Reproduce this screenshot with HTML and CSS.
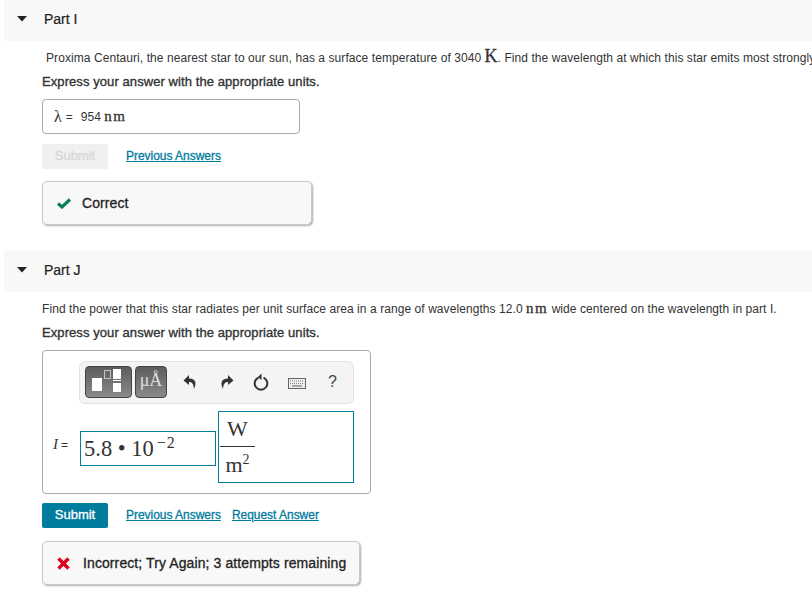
FILE: index.html
```html
<!DOCTYPE html>
<html lang="en">
<head>
<meta charset="utf-8">
<title>Parts</title>
<link rel="stylesheet" href="styles.css">
</head>
<body>
<section class="part part-i">
  <header class="part-head">
    <svg class="caret" width="10" height="6" viewBox="0 0 10 6"><path d="M0 0H10L5 5.500Z" fill="#222"/></svg>
    <span>Part I</span>
  </header>
  <div class="body">
    <p class="prompt first">Proxima Centauri, the nearest star to our sun, has a surface temperature of 3040 <span class="unit big">K</span>. Find the wavelength at which this star emits most strongly.</p>
    <p class="instr first-instr">Express your answer with the appropriate units.</p>
    <div class="answer-box"><span class="lam">λ</span><span class="eq">=</span><span>954 <span class="unit">nm</span></span></div>
    <div class="actions">
      <button class="btn disabled" type="button">Submit</button>
      <a class="link" href="#">Previous Answers</a>
    </div>
    <div class="feedback ok">
      <svg class="fb-icon" width="14" height="11" viewBox="0 0 14 11"><path d="M1 5.500L5 9L13 1.500" fill="none" stroke="#0d8050" stroke-width="3.200"/></svg>
      <span>Correct</span>
    </div>
  </div>
</section>
<section class="part part-j">
  <header class="part-head">
    <svg class="caret" width="10" height="6" viewBox="0 0 10 6"><path d="M0 0H10L5 5.500Z" fill="#222"/></svg>
    <span>Part J</span>
  </header>
  <div class="body">
    <p class="prompt">Find the power that this star radiates per unit surface area in a range of wavelengths 12.0 <span class="unit">nm</span> wide centered on the wavelength in part I.</p>
    <p class="instr">Express your answer with the appropriate units.</p>
    <div class="editor">
      <div class="toolbar">
        <div class="tool tool-a">
          <svg width="45" height="30" viewBox="0 0 45 30"><rect x="6" y="11" width="10" height="13" fill="#fff"/><rect x="18.500" y="3.500" width="6" height="8" fill="none" stroke="#c4c4c4"/><rect x="27" y="2" width="8" height="10" fill="#fff"/><rect x="27" y="13" width="8" height="1" fill="#fff"/><rect x="27" y="16" width="8" height="9" fill="#fff"/></svg>
        </div>
        <div class="tool tool-b">μÅ</div>
        <svg class="act act-undo" width="14" height="16" viewBox="0 0 14 16"><path d="M6 1L0.500 6.500L6 11V8C9 8 10.500 9.500 11 15C13.500 10 13.500 4.500 6 4.500Z" fill="#333"/></svg>
        <svg class="act act-redo" width="14" height="16" viewBox="0 0 14 16"><path d="M8 1L13.500 6.500L8 11V8C5 8 3.500 9.500 3 15C0.500 10 0.500 4.500 8 4.500Z" fill="#333"/></svg>
        <svg class="act act-reset" width="16" height="18" viewBox="0 0 16 18"><path d="M5.500 4.600A6.300 6.300 0 1 0 10.500 4.600" fill="none" stroke="#333" stroke-width="2"/><path d="M8.500 0.500V7L4.800 4Z" fill="#333"/></svg>
        <svg class="act act-keys" width="18" height="11" viewBox="0 0 18 11"><rect x="0.500" y="0.500" width="17" height="10" fill="#eee" stroke="#666"/><path d="M2 3H16M2 5.500H16" stroke="#888" stroke-width="1.200" stroke-dasharray="1 1"/><path d="M4 8H14" stroke="#777" stroke-width="1.200"/></svg>
        <span class="act act-help">?</span>
      </div>
      <div class="math-row">
        <span class="var"><i>I</i><span class="var-eq">=</span></span>
        <div class="math-input value">5.8 • 10<sup>−2</sup></div>
        <div class="math-input units">
          <div class="frac"><span class="num">W</span><span class="den">m<sup>2</sup></span></div>
        </div>
      </div>
    </div>
    <div class="actions">
      <button class="btn primary" type="button">Submit</button>
      <a class="link" href="#">Previous Answers</a>
      <a class="link" href="#">Request Answer</a>
    </div>
    <div class="feedback bad">
      <svg class="fb-icon" width="13" height="13" viewBox="0 0 13 13"><path d="M1.500 1.500L11.500 11.500M11.500 1.500L1.500 11.500" fill="none" stroke="#e0001b" stroke-width="3.400"/></svg>
      <span>Incorrect; Try Again; 3 attempts remaining</span>
    </div>
  </div>
</section>
</body>
</html>
```
FILE: styles.css
```css
* { box-sizing: border-box; }
html, body { margin: 0; padding: 0; }
body {
  width: 812px;
  height: 597px;
  overflow: hidden;
  font-family: "Liberation Sans", Arial, sans-serif;
  font-size: 12px;
  color: #333;
  background: #fff;
}
p { margin: 0; }
.part-head {
  margin-left: 4px;
  height: 41px;
  background: #f8f8f8;
  display: flex;
  align-items: center;
  gap: 17px;
  padding: 0 0 3px 13px;
  font-size: 14px;
  color: #222;
  -webkit-text-stroke: 0.2px #222;
}
.part-j { margin-top: 25px; }
.part-j .part-head { height: 42px; }
.body { padding-left: 42px; }
.prompt {
  white-space: nowrap;
  overflow: hidden;
  height: 18px;
  line-height: 18px;
  margin-top: 7px;
  color: #333;
  letter-spacing: 0.07px;
}
.prompt.first { margin-left: 4px; margin-top: 6px; }
.unit {
  font-family: "Liberation Serif", serif;
  color: #333;
  font-size: 15px;
  letter-spacing: 1.5px;
  -webkit-text-stroke: 0.3px #333;
}
.unit.big { font-size: 18px; line-height: 1; letter-spacing: 0; }
.instr {
  font-size: 13px;
  line-height: 18px;
  margin-top: 7px;
  color: #333;
  letter-spacing: 0.08px;
  -webkit-text-stroke: 0.35px #333;
}
.first-instr { margin-top: 8px; }
.answer-box {
  margin-top: 8px;
  width: 258px;
  height: 35px;
  border: 1px solid #aaa;
  border-radius: 4px;
  display: flex;
  align-items: center;
  padding-left: 11px;
  gap: 4px;
  color: #333;
}
.lam { font-family: "Liberation Serif", serif; font-size: 16px; }
.eq { margin-right: 4px; }
.actions {
  display: flex;
  align-items: center;
  margin-top: 10px;
  height: 25px;
}
.btn {
  width: 66px;
  height: 25px;
  border: 0;
  border-radius: 2px;
  font: 13px "Liberation Sans", Arial, sans-serif;
  -webkit-text-stroke: 0.3px currentColor;
  padding: 0 0 2px;
  margin-right: 18px;
}
.btn.disabled { background: #f0f0f0; color: #d8d8d8; }
.btn.primary { background: #007c9f; color: #fff; }
.link {
  font-size: 12px;
  color: #007c9f;
  text-decoration: underline;
  margin-right: 11px;
  margin-bottom: 2px;
  letter-spacing: -0.03px;
  -webkit-text-stroke: 0.3px #007c9f;
}
.feedback {
  margin-top: 12px;
  height: 44px;
  border: 1px solid #c8c8c8;
  border-radius: 5px;
  background: #f8f8f8;
  box-shadow: 1px 1px 2px #aaa;
  display: flex;
  align-items: center;
  font-size: 14px;
  color: #222;
  letter-spacing: 0.1px;
  -webkit-text-stroke: 0.3px #222;
}
.feedback.ok { width: 270px; padding-left: 14px; gap: 11px; }
.feedback.bad { width: 318px; padding-left: 14px; gap: 13px; margin-top: 13px; }
.fb-icon { flex: none; }
.editor {
  margin-top: 8px;
  width: 329px;
  height: 144px;
  border: 1px solid #aaa;
  border-radius: 4px;
  padding: 10px 0 0 36px;
}
.editor + .actions { margin-top: 9px; }
.toolbar {
  width: 275px;
  height: 43px;
  background: #f4f4f4;
  border: 1px solid #e2e2e2;
  border-radius: 6px;
  display: flex;
  align-items: center;
  padding: 0 0 2px 5px;
}
.tool {
  height: 32px;
  border: 1px solid #444;
  border-radius: 4px;
  background: linear-gradient(#5c5c5c, #8a8a8a);
  color: #ddd;
  display: flex;
  align-items: center;
  justify-content: center;
}
.tool-a { width: 47px; }
.tool-b { width: 32px; margin-left: 3px; font: 18px "Liberation Serif", serif; padding-bottom: 2px; }
.act { flex: none; }
.act-undo { margin-left: 16px; }
.act-redo { margin-left: 23px; }
.act-reset { margin-left: 19px; }
.act-keys { margin-left: 19px; margin-top: 3px; }
.act-help { margin-left: 22px; font-size: 16px; color: #444; }
.math-row {
  display: flex;
  align-items: flex-start;
  margin-top: 7px;
  margin-left: -26px;
}
.var { font: 15px "Liberation Serif", serif; width: 27px; color: #333; margin-top: 25px; }
.var-eq { font: 12px "Liberation Sans", Arial, sans-serif; margin-left: 3px; }
.math-input { border: 1px solid #007c9f; font-family: "Liberation Serif", serif; color: #333; }
.value {
  width: 136px;
  height: 35px;
  margin-top: 20px;
  font-size: 22.500px;
  line-height: 33px;
  padding-left: 3px;
}
.value sup { font-size: 16px; line-height: 0; vertical-align: 8px; margin-left: 3px; letter-spacing: 1px; }
.units {
  width: 136px;
  height: 72px;
  margin-left: 2px;
  padding-left: 1px;
}
.frac { width: 35px; display: flex; flex-direction: column; align-items: center; font-size: 22px; }
.num { height: 35px; line-height: 33px; width: 100%; text-align: center; border-bottom: 1px solid #333; }
.den { line-height: 36px; }
.den sup { font-size: 14px; line-height: 0; vertical-align: 8px; }
```
